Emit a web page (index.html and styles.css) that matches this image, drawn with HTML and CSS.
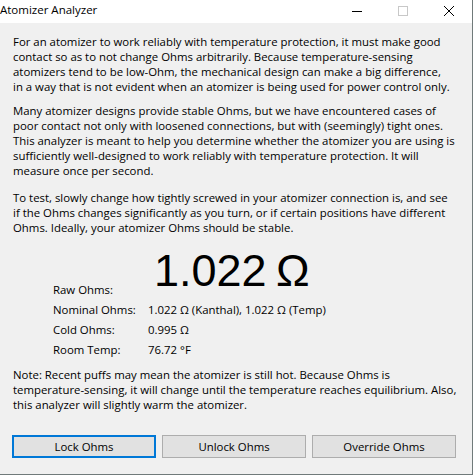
FILE: index.html
```html
<!DOCTYPE html>
<html lang="en">
<head>
    <meta charset="UTF-8">
    <meta name="viewport" content="width=device-width, initial-scale=1.0">
    <title>Atomizer Analyzer</title>
    <link rel="stylesheet" href="styles.css">
</head>
<body>
    <div class="window">
        <div class="titlebar">
            <span class="title">Atomizer Analyzer</span>
            <div class="controls">
                <div class="ctl">
                    <svg width="10" height="10" viewBox="0 0 10 10"><path d="M0 5.5H10" stroke="#000" stroke-width="1"/></svg>
                </div>
                <div class="ctl">
                    <svg width="10" height="10" viewBox="0 0 10 10"><rect x="0.5" y="0.5" width="9" height="9" fill="none" stroke="#c8c8c8" stroke-width="1"/></svg>
                </div>
                <div class="ctl">
                    <svg width="10" height="10" viewBox="0 0 10 10"><path d="M0 0L10 10M10 0L0 10" stroke="#000" stroke-width="1"/></svg>
                </div>
            </div>
        </div>
        <div class="content">
            <p class="para first">For an atomizer to work reliably with temperature protection, it must make good<br>contact so as to not change Ohms arbitrarily. Because temperature-sensing<br>atomizers tend to be low-Ohm, the mechanical design can make a big difference,<br>in a way that is not evident when an atomizer is being used for power control only.</p>
            <p class="para second">Many atomizer designs provide stable Ohms, but we have encountered cases of<br>poor contact not only with loosened connections, but with (seemingly) tight ones.<br>This analyzer is meant to help you determine whether the atomizer you are using is<br>sufficiently well-designed to work reliably with temperature protection. It will<br>measure once per second.</p>
            <p class="para">To test, slowly change how tightly screwed in your atomizer connection is, and see<br>if the Ohms changes significantly as you turn, or if certain positions have different<br>Ohms. Ideally, your atomizer Ohms should be stable.</p>

            <div class="readout">
                <div class="label">Raw Ohms:</div>
                <div class="big">1.022 &Omega;</div>
                <div class="label">Nominal Ohms:</div>
                <div class="value">1.022 &Omega; (Kanthal), 1.022 &Omega; (Temp)</div>
                <div class="label">Cold Ohms:</div>
                <div class="value">0.995 &Omega;</div>
                <div class="label">Room Temp:</div>
                <div class="value">76.72 &deg;F</div>
            </div>

            <p class="para note">Note: Recent puffs may mean the atomizer is still hot. Because Ohms is<br>temperature-sensing, it will change until the temperature reaches equilibrium. Also,<br>this analyzer will slightly warm the atomizer.</p>

            <div class="buttons">
                <button class="btn focused">Lock Ohms</button>
                <button class="btn">Unlock Ohms</button>
                <button class="btn">Override Ohms</button>
            </div>
        </div>
    </div>
</body>
</html>
```

FILE: styles.css
```css
body {
    margin: 0;
    background: #ffffff;
    font-family: 'Open Sans', sans-serif;
    font-size: 11.4px;
    color: #000;
}
.window {
    width: 472px;
    height: 474px;
    border-right: 1px solid #707a7a;
    border-bottom: 1px solid #707a7a;
    background: #f0f0f0;
    display: flex;
    flex-direction: column;
}
.titlebar {
    height: 23px;
    background: #ffffff;
    display: flex;
    align-items: flex-start;
    justify-content: space-between;
}
.title {
    font-size: 11.5px;
    line-height: 20px;
    padding-left: 0;
}
.controls {
    display: flex;
}
.ctl {
    width: 46px;
    height: 21px;
    display: flex;
    align-items: center;
    justify-content: center;
}
.ctl svg { display: block; }
.content {
    padding: 11px 13px 0 13px;
}
.para {
    margin: 0 0 12px 0;
    line-height: 15px;
    white-space: nowrap;
}
.para.first { margin-bottom: 9px; }
.readout {
    display: grid;
    grid-template-columns: 95px auto;
    grid-template-rows: 53px 20px 20px 20px;
    align-items: end;
    margin: 11px 0 7px 40px;
}
.label, .value {
    line-height: 20px;
    white-space: nowrap;
}
.big {
    font-family: 'Liberation Sans', Arial, sans-serif;
    font-size: 45px;
    line-height: 48px;
    word-spacing: -3px;
    margin: 0 0 5px 6px;
}
.note { margin-top: 0; }
.buttons {
    display: flex;
    gap: 6px;
    margin-top: 23px;
    margin-left: -1px;
}
.btn {
    width: 144px;
    height: 23px;
    background: #e1e1e1;
    border: 1px solid #adadad;
    font-family: 'Open Sans', sans-serif;
    font-size: 11.4px;
    color: #000;
    padding: 0;
}
.btn.focused {
    border: 2px solid #0078d7;
}
```
